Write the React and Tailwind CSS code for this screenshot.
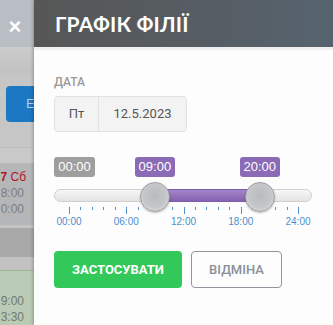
import React from 'react';

const TRACK_W = 258;
const TICK_START = 15;
const TICK_SPAN = 229;

const pos = (h) => TICK_START + (h / 24) * TICK_SPAN;

function Backdrop() {
  return (
    <div className="w-[34px] shrink-0 flex flex-col overflow-hidden font-['Liberation_Sans',Arial,sans-serif]">
      <div className="h-[47px] bg-[#b8bec4] flex items-center justify-center">
        <span className="text-white text-[22px] font-bold leading-none mt-[6px] ml-[-4px]">×</span>
      </div>
      <div className="h-[26px] bg-gradient-to-b from-[#cbcbcb] to-[#c2c2c2]" />
      <div className="h-[74px] bg-[#c6c6c6] pt-[13px]">
        <div className="h-[36px] ml-[6px] rounded-l-[4px] bg-[#1c78c3] flex items-center pl-[20px] text-[#b9cde0] text-[13px]">
          E
        </div>
      </div>
      <div className="h-[16px] bg-[#c9c9c9] border-t border-[#bdbdbd]" />
      <div className="h-[62px] bg-[#b4b6b8] flex flex-col items-end pt-[6px] pr-[8px] text-[12px] leading-[16px] text-[#7c7e80] whitespace-nowrap">
        <div className="text-[#b8121e]"><span className="font-bold">7</span> Сб</div>
        <div className="mr-[2px]">8:00</div>
        <div className="mr-[2px]">0:00</div>
      </div>
      <div className="h-[3px] bg-[#c4c4c4]" />
      <div className="h-[29px] bg-[#a9a9a9]" />
      <div className="h-[13px] bg-[#c2c2c2]" />
      <div className="flex-1 bg-[#b9cbb5] border-t border-[#9fb89b] flex flex-col items-end pt-[22px] pr-[10px] text-[12px] leading-[16px] text-[#6f7a6e] whitespace-nowrap">
        <div>9:00</div>
        <div>3:30</div>
      </div>
    </div>
  );
}

function Tag({ left, width, className, children }) {
  return (
    <div
      className={`absolute top-0 h-[20px] rounded-[3px] text-white text-[13px] leading-[20px] text-center ${className}`}
      style={{ left, width }}
    >
      {children}
    </div>
  );
}

function Handle({ center }) {
  return (
    <div
      className="absolute top-[25px] w-[30px] h-[30px] rounded-full border border-[#9c9c9c] bg-[radial-gradient(circle_at_50%_45%,#b9bcbf_0%,#c4c7ca_55%,#e6e7e8_100%)] shadow-[0_1px_2px_rgba(0,0,0,0.25)]"
      style={{ left: center - 15 }}
    />
  );
}

function RangeSlider({ from, to }) {
  const ticks = Array.from({ length: 21 }, (_, i) => i);
  const a = pos(from);
  const b = pos(to);

  return (
    <div className="relative h-[72px] font-['Liberation_Sans',Arial,sans-serif]" style={{ width: TRACK_W }}>
      <Tag left={0} width={41} className="bg-[#9e9e9e]">00:00</Tag>
      <Tag left={a - 20} width={40} className="bg-[#8c6bb6]">09:00</Tag>
      <Tag left={b - 20} width={40} className="bg-[#8c6bb6]">20:00</Tag>

      <div className="absolute left-0 right-0 top-[32px] h-[13px] rounded-full border border-[#cfcfcf] bg-gradient-to-b from-[#f6f6f6] to-[#e4e4e4]" />
      <div
        className="absolute top-[32px] h-[13px] border-y border-[#7d5ea6] bg-gradient-to-b from-[#a385c9] to-[#8462b0]"
        style={{ left: a, width: b - a }}
      />

      {ticks.map((i) => {
        const major = i % 5 === 0;
        return (
          <div
            key={i}
            className={`absolute top-[50px] w-px bg-[#4c8fcf] ${major ? 'h-[7px]' : 'h-[3px]'}`}
            style={{ left: TICK_START + (i * TICK_SPAN) / 20 }}
          />
        );
      })}
      {['00:00', '06:00', '12:00', '18:00', '24:00'].map((t, i) => (
        <div
          key={t}
          className="absolute top-[59px] w-[40px] text-center text-[10px] leading-[12px] text-[#4c8fcf]"
          style={{ left: TICK_START + (i * TICK_SPAN) / 4 - 20 }}
        >
          {t}
        </div>
      ))}

      <Handle center={a} />
      <Handle center={b} />
    </div>
  );
}

export default function App() {
  return (
    <div className="w-[333px] h-[325px] flex overflow-hidden bg-[#c6c6c6]">
      <Backdrop />
      <div className="flex-1 flex flex-col bg-[#fdfdfd] shadow-[-1px_0_3px_rgba(0,0,0,0.25)] font-['Roboto',sans-serif]">
        <div className="h-[47px] shrink-0 flex items-center pl-[21px] bg-gradient-to-r from-[#565656] to-[#56636e] border-b-[3px] border-[#f0f0f0] box-content">
          <h1 className="font-['Lato',sans-serif] font-bold text-[21px] text-white tracking-[0.2px] mt-[1px]">
            ГРАФІК ФІЛІЇ
          </h1>
        </div>

        <div className="px-[20px] pt-[25px]">
          <div className="text-[12px] font-medium text-[#9a9a9a] leading-[14px]">ДАТА</div>
          <div className="mt-[7px] w-[133px] h-[36px] flex rounded-[4px] border border-[#e2e2e2] bg-[#f3f3f3] text-[13px] text-[#555555]">
            <div className="w-[44px] flex items-center justify-center border-r border-[#e2e2e2]">Пт</div>
            <div className="flex-1 flex items-center justify-center">12.5.2023</div>
          </div>

          <div className="mt-[25px]">
            <RangeSlider from={9} to={20} />
          </div>

          <div className="mt-[22px] flex gap-[9px]">
            <button className="w-[128px] h-[37px] rounded-[4px] bg-[#33c95a] text-white text-[13px] font-bold">
              ЗАСТОСУВАТИ
            </button>
            <button className="w-[91px] h-[37px] rounded-[4px] border border-[#8f959c] text-[#8a9099] text-[13px] font-medium">
              ВІДМІНА
            </button>
          </div>
        </div>
      </div>
    </div>
  );
}
